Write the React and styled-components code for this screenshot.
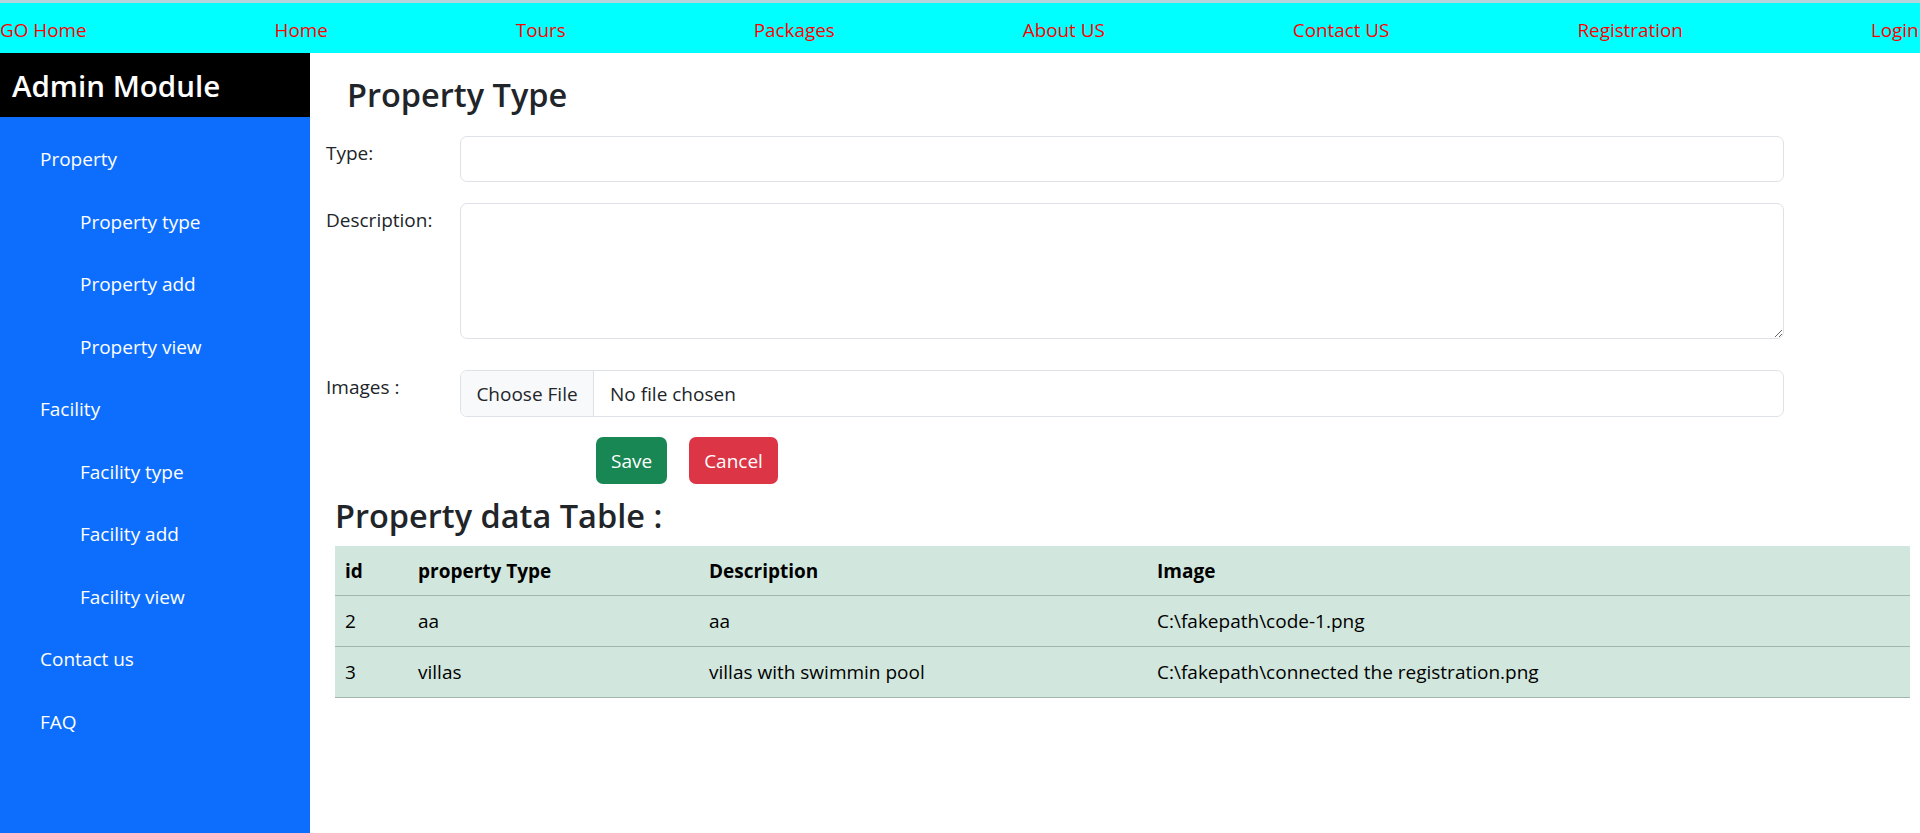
import React from "react";
import styled, { createGlobalStyle } from "styled-components";

const Global = createGlobalStyle`
  html, body { margin: 0; padding: 0; }
  body {
    font-family: "Open Sans", "Noto Sans", sans-serif;
    font-size: 19px;
    color: #212529;
    background: #fff;
  }
  * { box-sizing: border-box; }
`;

const Page = styled.div`
  min-height: 100vh;
  display: flex;
  flex-direction: column;
  overflow: hidden;
`;

const TopBar = styled.nav`
  height: 53px;
  border-top: 3px solid #b3d6dc;
  background: #00ffff;
  display: flex;
  align-items: center;
  gap: 188px;
  white-space: nowrap;
  overflow: hidden;
  padding-top: 3px;
`;

const NavLink = styled.a`
  color: #ff0000;
  font-size: 18.85px;
  text-decoration: none;
  flex: none;
`;

const Body = styled.div`
  flex: 1;
  display: flex;
`;

const Sidebar = styled.aside`
  width: 310px;
  flex: none;
  background: #0d6efd;
`;

const SideHeader = styled.div`
  height: 64px;
  background: #000;
  color: #fff;
  display: flex;
  align-items: center;
  padding-left: 12px;
  font-size: 29.5px;
  font-weight: 600;
`;

const SideList = styled.ul`
  list-style: none;
  margin: 11px 0 0;
  padding: 0;
`;

const SideItem = styled.li`
  padding: 16.25px 0 16.25px ${(p) => (p.$sub ? 80 : 40)}px;
  line-height: 30px;
  color: #fff;
  font-size: 19px;
`;

const Main = styled.main`
  flex: 1;
  padding: 22px 10px 40px 16px;
`;

const Title = styled.h3`
  margin: 0 0 21px 21px;
  font-size: 32.5px;
  line-height: 40px;
  font-weight: 600;
  color: #212529;
`;

const Form = styled.form`
  display: grid;
  grid-template-columns: 134px 1324px;
  row-gap: 21px;
`;

const Label = styled.label`
  padding-top: 2px;
  line-height: 30px;
  font-size: 19px;
  color: #212529;
`;

const TextInput = styled.input`
  height: 46px;
  border: 1px solid #dee2e6;
  border-radius: 7px;
  padding: 7px 15px;
  font: inherit;
  outline: none;
`;

const TextArea = styled.textarea`
  height: 136px;
  border: 1px solid #dee2e6;
  border-radius: 7px;
  padding: 7px 15px;
  font: inherit;
  outline: none;
  resize: vertical;
`;

const FileBox = styled.div`
  height: 47px;
  border: 1px solid #dee2e6;
  border-radius: 7px;
  display: flex;
  align-items: stretch;
  overflow: hidden;
  margin-top: 10px;
`;

const FileButton = styled.span`
  width: 133px;
  background: #f8f9fa;
  border-right: 1px solid #dee2e6;
  display: flex;
  align-items: center;
  justify-content: center;
  color: #212529;
`;

const FileName = styled.span`
  display: flex;
  align-items: center;
  padding-left: 16px;
  color: #212529;
`;

const ImagesLabel = styled(Label)`
  margin-top: 10px;
`;

const ButtonRow = styled.div`
  grid-column: 1 / -1;
  display: flex;
  gap: 22px;
  margin-left: 270px;
  margin-top: -1px;
`;

const Button = styled.button`
  height: 47px;
  padding: 0 15px;
  border: none;
  border-radius: 7px;
  color: #fff;
  font: inherit;
  background: ${(p) => (p.$variant === "danger" ? "#dc3545" : "#198754")};
`;

const TableSection = styled.section`
  margin-left: 9px;
`;

const TableTitle = styled.h3`
  margin: 12px 0 10px;
  font-size: 32.5px;
  line-height: 40px;
  font-weight: 600;
  color: #212529;
`;

const Table = styled.table`
  width: 1575px;
  border-collapse: collapse;
  table-layout: fixed;
  background: #d1e7dd;
  color: #000;
`;

const Th = styled.th`
  text-align: left;
  font-weight: 700;
  padding: 9.5px 10px;
  line-height: 30px;
  border-bottom: 1px solid #a3b6ad;
`;

const Td = styled.td`
  padding: 10px 10px;
  line-height: 30px;
  border-bottom: 1px solid #a3b6ad;
`;

const navItems = ["GO Home", "Home", "Tours", "Packages", "About US", "Contact US", "Registration", "Login"];

const sideItems = [
  { label: "Property" },
  { label: "Property type", sub: true },
  { label: "Property add", sub: true },
  { label: "Property view", sub: true },
  { label: "Facility" },
  { label: "Facility type", sub: true },
  { label: "Facility add", sub: true },
  { label: "Facility view", sub: true },
  { label: "Contact us" },
  { label: "FAQ" },
];

const rows = [
  { id: 2, type: "aa", desc: "aa", img: "C:\\fakepath\\code-1.png" },
  { id: 3, type: "villas", desc: "villas with swimmin pool", img: "C:\\fakepath\\connected the registration.png" },
];

export default function App() {
  return (
    <Page>
      <Global />
      <TopBar>
        {navItems.map((n) => (
          <NavLink key={n} href="#">{n}</NavLink>
        ))}
      </TopBar>
      <Body>
        <Sidebar>
          <SideHeader>Admin Module</SideHeader>
          <SideList>
            {sideItems.map((s) => (
              <SideItem key={s.label} $sub={s.sub}>{s.label}</SideItem>
            ))}
          </SideList>
        </Sidebar>
        <Main>
          <Title>Property Type</Title>
          <Form onSubmit={(e) => e.preventDefault()}>
            <Label>Type:</Label>
            <TextInput type="text" />
            <Label>Description:</Label>
            <TextArea />
            <ImagesLabel>Images :</ImagesLabel>
            <FileBox>
              <FileButton>Choose File</FileButton>
              <FileName>No file chosen</FileName>
            </FileBox>
            <ButtonRow>
              <Button type="button">Save</Button>
              <Button type="button" $variant="danger">Cancel</Button>
            </ButtonRow>
          </Form>
          <TableSection>
            <TableTitle>Property data Table :</TableTitle>
            <Table>
              <colgroup>
                <col style={{ width: 73 }} />
                <col style={{ width: 291 }} />
                <col style={{ width: 448 }} />
                <col style={{ width: 763 }} />
              </colgroup>
              <thead>
                <tr>
                  <Th>id</Th>
                  <Th>property Type</Th>
                  <Th>Description</Th>
                  <Th>Image</Th>
                </tr>
              </thead>
              <tbody>
                {rows.map((r) => (
                  <tr key={r.id}>
                    <Td>{r.id}</Td>
                    <Td>{r.type}</Td>
                    <Td>{r.desc}</Td>
                    <Td>{r.img}</Td>
                  </tr>
                ))}
              </tbody>
            </Table>
          </TableSection>
        </Main>
      </Body>
    </Page>
  );
}
